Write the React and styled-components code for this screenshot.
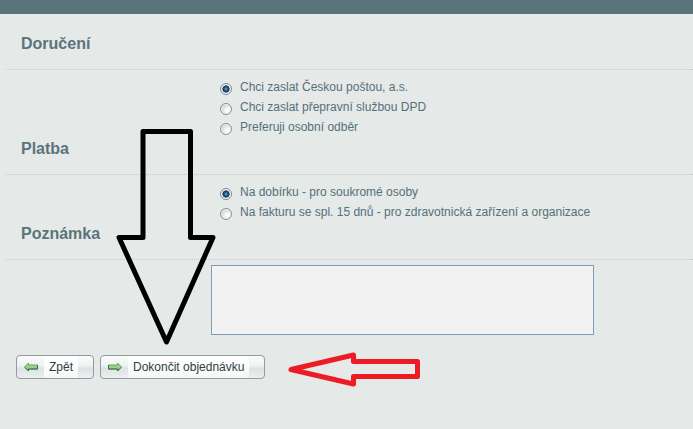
import React from "react";
import { useState } from "react";
import styled, { createGlobalStyle } from "styled-components";

const deliveryOptions = [
    { id: "posta", label: "Chci zaslat Českou poštou, a.s." },
    { id: "dpd", label: "Chci zaslat přepravní službou DPD" },
    { id: "osobni", label: "Preferuji osobní odběr" },
];

const paymentOptions = [
    { id: "dobirka", label: "Na dobírku - pro soukromé osoby" },
    { id: "faktura", label: "Na fakturu se spl. 15 dnů - pro zdravotnická zařízení a organizace" },
];

function ArrowIcon({ flip }) {
    return (
        <Icon viewBox="0 0 16 10" $flip={flip} aria-hidden="true">
            <path d="M1.5 5 L5.5 1 V3 H14.5 V7 H5.5 V9 Z" fill="#9bd08c" stroke="#69a765" strokeLinejoin="round" />
            <path d="M2 5.5 L5.5 9 V7 H14.5 V3" fill="none" stroke="#3f6646" strokeLinejoin="round" />
        </Icon>
    );
}

function RadioList({ name, labelledBy, options }) {
    const [selected, setSelected] = useState(options[0].id);
    return (
        <Options role="radiogroup" aria-labelledby={labelledBy}>
            {options.map((option) => (
                <Option key={option.id}>
                    <Radio
                        type="radio"
                        name={name}
                        value={option.id}
                        checked={selected === option.id}
                        onChange={() => setSelected(option.id)}
                    />
                    {option.label}
                </Option>
            ))}
        </Options>
    );
}

function App() {
    const [note, setNote] = useState("");
    return (
        <Page>
            <GlobalStyle />
            <TopBar />
            <Form onSubmit={(e) => e.preventDefault()}>
                <Heading id="doruceni">Doručení</Heading>
                <RadioList name="delivery" labelledBy="doruceni" options={deliveryOptions} />
                <Heading id="platba">Platba</Heading>
                <RadioList name="payment" labelledBy="platba" options={paymentOptions} />
                <Heading id="poznamka">Poznámka</Heading>
                <Note aria-labelledby="poznamka" value={note} onChange={(e) => setNote(e.target.value)} />
                <Buttons>
                    <Button type="button">
                        <ArrowIcon />
                        <Caption>Zpět</Caption>
                    </Button>
                    <Button type="submit">
                        <ArrowIcon flip />
                        <Caption>Dokončit objednávku</Caption>
                    </Button>
                </Buttons>
            </Form>
            <BlackArrow viewBox="0 0 102 220" aria-hidden="true">
                <path d="M28 3.5 H75.5 V109.5 H98 L51.5 214 L4 109.5 H28 Z" fill="none" stroke="#000" strokeWidth="5" strokeLinejoin="round" />
            </BlackArrow>
            <RedArrow viewBox="0 0 134 38" aria-hidden="true">
                <path d="M4 19.5 L66.5 5 V11.5 H130.5 V26.5 H66.5 V34 Z" fill="none" stroke="#ed1c24" strokeWidth="5" strokeLinejoin="round" />
            </RedArrow>
        </Page>
    );
}

const GlobalStyle = createGlobalStyle`
    body {
        margin: 0;
        background: #e5e9e8;
        color: #56707a;
        font-family: "Liberation Sans", Arial, sans-serif;
        font-size: 12px;
    }
    * {
        box-sizing: border-box;
    }
`;
const Page = styled.div`
    position: relative;
    min-height: 100vh;
`;
const TopBar = styled.div`
    height: 14px;
    background: #5b747a;
`;
const Form = styled.form`
    padding: 18px 0 0 6px;
`;
const Heading = styled.h2`
    margin: 0;
    padding: 0 15px 13px;
    border-bottom: 1px dotted #c0c9ca;
    color: #5b747c;
    font-size: 16px;
    line-height: 24px;
`;
const Options = styled.div`
    padding: 7px 0 0 214px;
`;
const Option = styled.label`
    display: flex;
    gap: 8px;
    line-height: 20px;
`;
const Radio = styled.input`
    appearance: none;
    flex: none;
    width: 12px;
    height: 12px;
    margin: 6px 0 0;
    border: 1px solid #8b9394;
    border-radius: 50%;
    background: radial-gradient(circle at 65% 65%, #fbfbfb 20%, #c3c8ca 80%);
    box-shadow: inset 0 0 0 1px #f4f6f6;
    &:checked {
        border-color: #7b8c99;
        background: radial-gradient(circle at 50% 50%, #6fb0d8 0, #2a6591 22%, #122f4d 46%, #e9eef1 56%);
    }
`;
const Note = styled.textarea`
    display: block;
    width: 383px;
    max-width: calc(100% - 205px);
    height: 70px;
    margin: 5px 0 0 205px;
    border: 1px solid #849db5;
    background: #f2f2f2;
    font: inherit;
    color: inherit;
    resize: none;
`;
const Buttons = styled.div`
    display: flex;
    gap: 6px;
    padding: 20px 10px;
`;
const Button = styled.button`
    display: flex;
    align-items: center;
    gap: 5px;
    height: 24px;
    padding: 0 15px 0 6px;
    border: 1px solid #949b9d;
    border-radius: 4px;
    background: linear-gradient(#fafbfb 0, #eff2f3 45%, #dce1e3 55%, #eceff0 100%);
    color: #333c40;
    font: inherit;
`;
const Caption = styled.span`
    padding: 0 5px;
    line-height: 22px;
    background: linear-gradient(#fff, #f6f8f8);
`;
const Icon = styled.svg`
    width: 16px;
    height: 10px;
    transform: ${(props) => (props.$flip ? "scaleX(-1)" : "none")};
`;
const BlackArrow = styled.svg`
    position: absolute;
    top: 128px;
    left: 115px;
    width: 102px;
    height: 220px;
    pointer-events: none;
`;
const RedArrow = styled.svg`
    position: absolute;
    top: 350px;
    left: 287px;
    width: 134px;
    height: 38px;
    pointer-events: none;
`;

export default App;
